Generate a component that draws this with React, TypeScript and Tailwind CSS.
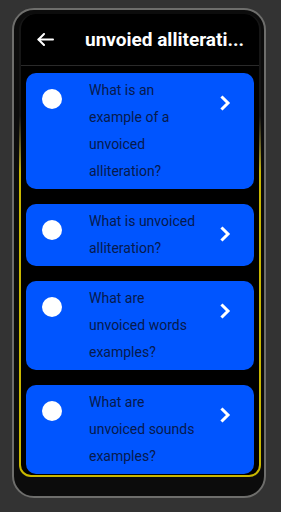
import React from "react";

const questions = [
  "What is an example of a unvoiced alliteration?",
  "What is unvoiced alliteration?",
  "What are unvoiced words examples?",
  "What are unvoiced sounds examples?",
];

function BackArrow() {
  return (
    <svg width="17" height="13" viewBox="0 0 17 13" fill="none" stroke="white" strokeWidth="2" strokeLinecap="round" strokeLinejoin="round">
      <path d="M16 6.5H1.5" />
      <path d="M7 1L1.5 6.5L7 12" />
    </svg>
  );
}

function Chevron() {
  return (
    <svg width="11" height="16" viewBox="0 0 11 16" fill="none" stroke="white" strokeWidth="3" strokeLinecap="square" strokeLinejoin="miter">
      <path d="M2.5 2.5L8 8L2.5 13.5" />
    </svg>
  );
}

export default function App() {
  return (
    <div
      className="w-[281px] h-[512px] bg-[#333333] pl-[12px] pt-[8px] overflow-hidden"
      style={{ fontFamily: "Roboto, 'Noto Sans', sans-serif" }}
    >
      {/* phone body */}
      <div className="w-[254px] h-[490px] rounded-[22px] border-2 border-[#6e6e6c] bg-[#0c0c0c] pl-[5px] pr-[3px] pt-[4px]">
        {/* screen edge: yellow rim fades in below the header */}
        <div className="w-[242px] h-[463px] rounded-t-[16px] rounded-b-[12px] bg-linear-to-b from-[#161616] from-[22%] to-[#c9b800] to-[34%] px-[2px] pb-[2px]">
          <div className="h-full bg-black rounded-t-[15px] rounded-b-[10px] overflow-hidden flex flex-col">
            {/* header */}
            <div className="h-[52px] shrink-0 flex items-center border-b border-[#2a2a2a]">
              <div className="w-[64px] pl-[16px] flex items-center">
                <BackArrow />
              </div>
              <h1 className="text-white font-bold text-[19px] leading-none whitespace-nowrap">
                unvoied alliterati...
              </h1>
            </div>

            {/* list */}
            <div className="flex flex-col gap-[15px] px-[5px] pt-[7px]">
              {questions.map((q) => (
                <div key={q} className="bg-[#0055ff] rounded-[10px] flex items-start py-[4px] pl-[16px] shrink-0">
                  <div className="w-[20px] h-[20px] rounded-full bg-white mt-[12px] shrink-0" />
                  <p className="ml-[27px] w-[110px] text-[14px] leading-[27px] text-[#071a4d]">
                    {q}
                  </p>
                  <div className="ml-[21px] mt-[18px] shrink-0">
                    <Chevron />
                  </div>
                </div>
              ))}
            </div>
          </div>
        </div>
      </div>
    </div>
  );
}
